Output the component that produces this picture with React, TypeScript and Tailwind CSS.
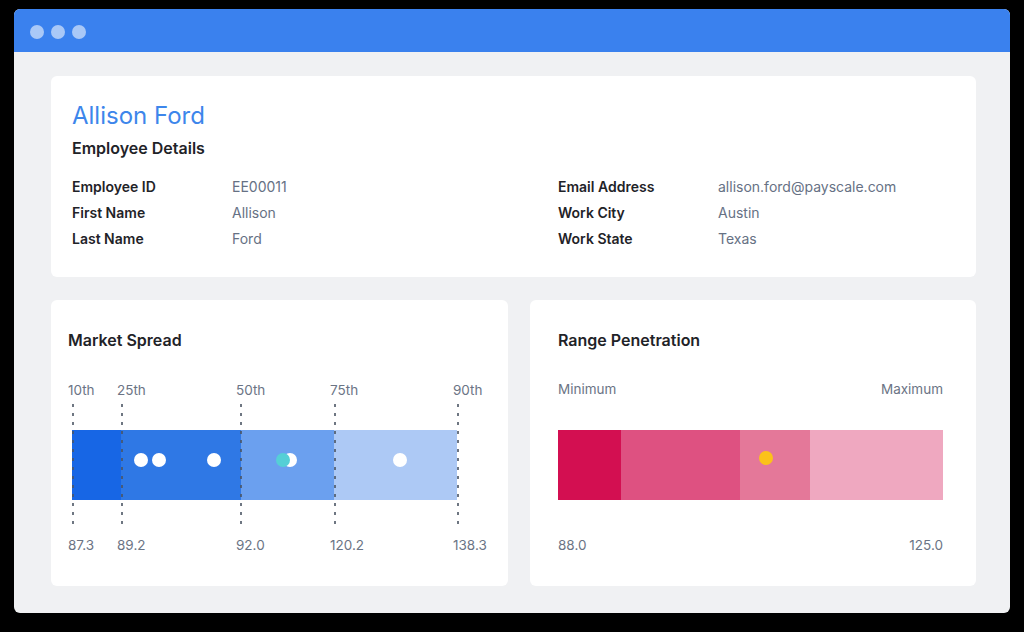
import React from 'react';

const font = { fontFamily: 'Inter, "Noto Sans", sans-serif' };

const leftDetails = [
  ['Employee ID', 'EE00011'],
  ['First Name', 'Allison'],
  ['Last Name', 'Ford'],
];

const rightDetails = [
  ['Email Address', 'allison.ford@payscale.com'],
  ['Work City', 'Austin'],
  ['Work State', 'Texas'],
];

// percentile marks, x is relative to the chart box
const marks = [
  { label: '10th', value: '87.3', x: 0 },
  { label: '25th', value: '89.2', x: 49 },
  { label: '50th', value: '92.0', x: 168 },
  { label: '75th', value: '120.2', x: 262 },
  { label: '90th', value: '138.3', x: 385 },
];

const blueSegments = [
  { x: 0, w: 49, color: '#1766e5' },
  { x: 49, w: 120, color: '#2f78e5' },
  { x: 169, w: 93, color: '#6ba0ef' },
  { x: 262, w: 123, color: '#adc9f5' },
];

const pinkSegments = [
  { x: 0, w: 63, color: '#d30f51' },
  { x: 63, w: 119, color: '#de5181' },
  { x: 182, w: 70, color: '#e47899' },
  { x: 252, w: 133, color: '#efa8c0' },
];

function DetailList({ rows }: { rows: string[][] }) {
  return (
    <div className="flex flex-col gap-[7px]">
      {rows.map(([label, value]) => (
        <div key={label} className="flex text-[14px] leading-[19px]">
          <span className="w-[160px] font-semibold text-[#1f2328]">{label}</span>
          <span className="text-[#667184]">{value}</span>
        </div>
      ))}
    </div>
  );
}

function MarketSpread() {
  return (
    <div className="relative mt-[30px] ml-[4px] h-[180px] w-[420px]">
      {marks.map((m) => (
        <span
          key={m.label}
          className="absolute top-0 text-[13.5px] leading-[18px] text-[#6b7485]"
          style={{ left: m.x - 4 }}
        >
          {m.label}
        </span>
      ))}
      <svg className="absolute left-0 top-[21px]" width="400" height="128">
        {blueSegments.map((s) => (
          <rect key={s.x} x={s.x} y="28" width={s.w} height="70" fill={s.color} />
        ))}
        {marks.map((m) => (
          <line
            key={m.label}
            x1={m.x + 1}
            x2={m.x + 1}
            y1="2"
            y2="126"
            stroke="#4b5563"
            strokeWidth="2"
            strokeDasharray="3 6"
            opacity="0.8"
          />
        ))}
        <circle cx="69" cy="58" r="7" fill="#fff" />
        <circle cx="87" cy="58" r="7" fill="#fff" />
        <circle cx="142" cy="58" r="7" fill="#fff" />
        <circle cx="218" cy="58" r="7" fill="#fff" />
        <circle cx="211" cy="58" r="7" fill="#55cfd6" />
        <circle cx="328" cy="58" r="7" fill="#fff" />
      </svg>
      <div className="absolute top-[155px] left-0 w-full">
        {marks.map((m) => (
          <span
            key={m.value}
            className="absolute text-[13.5px] leading-[18px] text-[#6b7485]"
            style={{ left: m.x - 4 }}
          >
            {m.value}
          </span>
        ))}
      </div>
    </div>
  );
}

function RangePenetration() {
  return (
    <div className="mt-[29px] flex w-[385px] flex-col">
      <div className="flex justify-between text-[13.5px] leading-[18px] text-[#6b7485]">
        <span>Minimum</span>
        <span>Maximum</span>
      </div>
      <svg className="mt-[32px]" width="385" height="70">
        {pinkSegments.map((s) => (
          <rect key={s.x} x={s.x} y="0" width={s.w} height="70" fill={s.color} />
        ))}
        <circle cx="208" cy="28" r="7" fill="#fbc21a" />
      </svg>
      <div className="mt-[36px] flex justify-between text-[13.5px] leading-[18px] text-[#6b7485]">
        <span>88.0</span>
        <span>125.0</span>
      </div>
    </div>
  );
}

export default function App() {
  return (
    <div className="h-[632px] w-[1024px] bg-black pl-[14px] pt-[9px]" style={font}>
      <div className="flex h-[604px] w-[996px] flex-col overflow-hidden rounded-[6px] bg-[#f0f1f3]">
        <div className="flex h-[43px] items-center gap-[7px] bg-[#3a81ee] pl-[16px] pt-[2px]">
          <span className="h-[14px] w-[14px] rounded-full bg-[#a9c8f7]" />
          <span className="h-[14px] w-[14px] rounded-full bg-[#a9c8f7]" />
          <span className="h-[14px] w-[14px] rounded-full bg-[#a9c8f7]" />
        </div>

        <div className="flex flex-1 flex-col gap-[23px] pl-[37px] pr-[34px] pt-[24px] pb-[27px]">
          <div className="flex h-[201px] flex-col rounded-[6px] bg-white px-[21px] pt-[22px]">
            <h1 className="text-[24px] leading-[36px] text-[#3d86eb]">Allison Ford</h1>
            <h2 className="mt-[3px] text-[16px] font-semibold leading-[22px] text-[#1f2328]">Employee Details</h2>
            <div className="mt-[18px] flex">
              <div className="w-[486px]">
                <DetailList rows={leftDetails} />
              </div>
              <DetailList rows={rightDetails} />
            </div>
          </div>

          <div className="flex flex-1 gap-[22px]">
            <div className="flex w-[457px] flex-col rounded-[6px] bg-white pl-[17px] pt-[29px]">
              <h3 className="text-[16px] font-semibold leading-[22px] text-[#1f2328]">Market Spread</h3>
              <MarketSpread />
            </div>
            <div className="flex flex-1 flex-col rounded-[6px] bg-white pl-[28px] pt-[29px]">
              <h3 className="text-[16px] font-semibold leading-[22px] text-[#1f2328]">Range Penetration</h3>
              <RangePenetration />
            </div>
          </div>
        </div>
      </div>
    </div>
  );
}
